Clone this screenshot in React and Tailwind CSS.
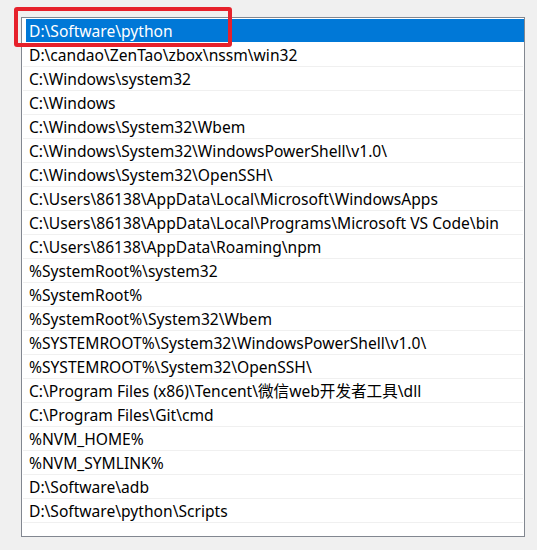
const paths = [
  "D:\\Software\\python",
  "D:\\candao\\ZenTao\\zbox\\nssm\\win32",
  "C:\\Windows\\system32",
  "C:\\Windows",
  "C:\\Windows\\System32\\Wbem",
  "C:\\Windows\\System32\\WindowsPowerShell\\v1.0\\",
  "C:\\Windows\\System32\\OpenSSH\\",
  "C:\\Users\\86138\\AppData\\Local\\Microsoft\\WindowsApps",
  "C:\\Users\\86138\\AppData\\Local\\Programs\\Microsoft VS Code\\bin",
  "C:\\Users\\86138\\AppData\\Roaming\\npm",
  "%SystemRoot%\\system32",
  "%SystemRoot%",
  "%SystemRoot%\\System32\\Wbem",
  "%SYSTEMROOT%\\System32\\WindowsPowerShell\\v1.0\\",
  "%SYSTEMROOT%\\System32\\OpenSSH\\",
  "C:\\Program Files (x86)\\Tencent\\微信web开发者工具\\dll",
  "C:\\Program Files\\Git\\cmd",
  "%NVM_HOME%",
  "%NVM_SYMLINK%",
  "D:\\Software\\adb",
  "D:\\Software\\python\\Scripts",
];

export default function App() {
  return (
    <div
      className="relative w-[537px] h-[550px] bg-[#f0f0f0] pt-[17px] pl-[21px]"
      style={{ fontFamily: '"Noto Sans", "Noto Sans CJK SC", sans-serif' }}
    >
      <div className="w-[504px] h-[520px] border border-[#828790] bg-white pt-[1px]">
        {paths.map((p, i) =>
          i === 0 ? (
            <div key={i} className="h-[24px] pl-[4px] pb-[1px]">
              <div className="h-[23px] bg-[#0078d7] text-white text-[15.6px] leading-[24px] pl-[3px]">
                {p}
              </div>
            </div>
          ) : (
            <div
              key={i}
              className="h-[24px] mx-[1px] border-b border-[#f0f0f0] text-black text-[15.6px] leading-[24px] pl-[6px] whitespace-nowrap"
            >
              {p}
            </div>
          ),
        )}
      </div>
      <div className="absolute left-[14px] top-[7px] w-[218px] h-[40px] border-[4px] border-[#e6212b] rounded-[3px]" />
    </div>
  );
}
